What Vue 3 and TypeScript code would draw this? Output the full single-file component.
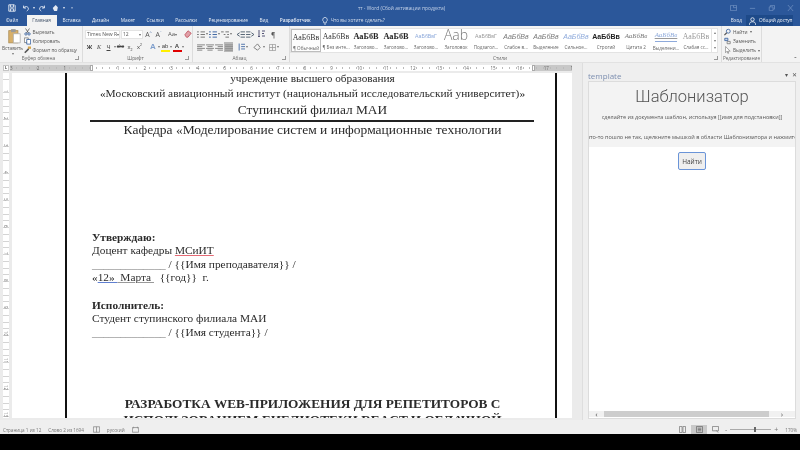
<script setup lang="ts">
const tabs = ['Файл', 'Главная', 'Вставка', 'Дизайн', 'Макет', 'Ссылки', 'Рассылки', 'Рецензирование', 'Вид', 'Разработчик']

const styles = [
  { big: 'АаБбВв', name: '¶ Обычный', cls: 'serif', active: true },
  { big: 'АаБбВв', name: '¶ Без инте...', cls: 'serif' },
  { big: 'АаБбВ', name: 'Заголово...', cls: 'serif bold' },
  { big: 'АаБбВ', name: 'Заголово...', cls: 'serif bold' },
  { big: 'АаБбВвГ', name: 'Заголово...', cls: 'small blue' },
  { big: 'Aab', name: 'Заголовок', cls: 'huge' },
  { big: 'АаБбВвГ', name: 'Подзагол...', cls: 'small grey' },
  { big: 'АаБбВв', name: 'Слабое в...', cls: 'ital' },
  { big: 'АаБбВв', name: 'Выделение', cls: 'ital' },
  { big: 'АаБбВв', name: 'Сильное...', cls: 'ital blue' },
  { big: 'АаБбВв', name: 'Строгий', cls: 'bold sans' },
  { big: 'АаБбВв', name: 'Цитата 2', cls: 'serif ital' },
  { big: 'АаБбВв', name: 'Выделени...', cls: 'serif ital blue under' },
  { big: 'АаБбВв', name: 'Слабая сс...', cls: 'serif grey' },
]

const hNums = [3, 2, 1, 0, 1, 2, 3, 4, 5, 6, 7, 8, 9, 10, 11, 12, 13, 14, 15, 16, 17, 18]
const vNums = [1, 2, 3, 4, 5, 6, 7, 8, 9, 10, 11, 12, 13]

const teacherLine = ' / {{Имя преподавателя}} /'
const yearLine = '  {{год}}  г.'
const studentLine = ' / {{Имя студента}} /'
</script>

<template>
  <div class="word">
    <header class="titlebar">
      <div class="qat">
        <svg width="8" height="8" viewBox="0 0 10 10"><path d="M1 1h7l1 1v7H1z M3 1v3h4V1 M3 9V6h4v3" fill="none" stroke="#fff" /></svg>
        <svg class="gap" width="8" height="8" viewBox="0 0 10 10"><path d="M2 2v3h3 M2 5c2-3 6-2 6 1 0 1-1 2-2 3" fill="none" stroke="#dfe6f2" stroke-width="1.2" /></svg>
        <span class="caret">▾</span>
        <svg width="8" height="8" viewBox="0 0 10 10"><path d="M8 2v3H5 M8 5C6 2 2 3 2 6c0 1 1 2 2 3" fill="none" stroke="#dfe6f2" stroke-width="1.2" /></svg>
        <svg class="gap" width="8" height="8" viewBox="0 0 11 10"><path d="M1 5l4-4 3 3-1 5H3z" fill="#e4e9f3" /></svg>
        <span class="caret">▾</span>
        <span class="caret gap">▿</span>
      </div>
      <div class="doc-title">тт - Word (Сбой активации продукта)</div>
      <div class="winbtns">
        <svg width="7" height="6" viewBox="0 0 9 8"><path d="M.5.5h8v7h-8z M4.500.5v3h4" fill="none" stroke="#6f8fc0" /></svg>
        <svg width="7" height="6" viewBox="0 0 9 8"><path d="M1 4.500h7" stroke="#6f8fc0" /></svg>
        <svg width="7" height="6" viewBox="0 0 9 8"><path d="M1.500 2.500h5v5h-5z M3 2.500V.5h5.500v5h-2" fill="none" stroke="#6f8fc0" /></svg>
        <svg width="7" height="6" viewBox="0 0 9 8"><path d="M1 0l7 8M8 0L1 8" stroke="#6f8fc0" /></svg>
      </div>
    </header>

    <nav class="tabrow">
      <span v-for="t in tabs" :key="t" class="tab" :class="{ on: t === 'Главная', bold: t === 'Разработчик', first: t === 'Файл' }">{{ t }}</span>
      <span class="tell">
        <svg width="6" height="8" viewBox="0 0 7 10"><path d="M3.500.5a3 3 0 0 1 1.500 5.500v1.500H2V6A3 3 0 0 1 3.500.5z M2.500 9h2" fill="none" stroke="#dce4f1" /></svg>
        Что вы хотите сделать?
      </span>
      <span class="login">Вход</span>
      <span class="share">
        <svg width="7" height="8" viewBox="0 0 9 10"><circle cx="4.500" cy="3" r="2.200" fill="none" stroke="#fff" /><path d="M.5 10c0-3 1.500-4 4-4s4 1 4 4" fill="none" stroke="#fff" /></svg>
        Общий доступ
      </span>
    </nav>

    <section class="ribbon">
      <div class="grp clip">
        <div class="grp-body clip-body">
          <div class="paste">
            <svg width="13" height="16" viewBox="0 0 17 20">
              <rect x="1" y="3" width="12" height="16" fill="#d8b06a" stroke="#a98a55" />
              <rect x="4" y="1" width="6" height="4" fill="#9a9a9a" />
              <path d="M7 7h9v12H7z" fill="#fff" stroke="#aaa" />
            </svg>
            <span>Вставить</span>
            <span class="mini-caret">▾</span>
          </div>
          <div class="clip-list">
            <span>
              <svg width="7" height="8" viewBox="0 0 9 9"><path d="M2 0l4 6M7 0L3 6" stroke="#555" /><circle cx="2.500" cy="7" r="1.500" fill="none" stroke="#2b579a" /><circle cx="6.500" cy="7" r="1.500" fill="none" stroke="#2b579a" /></svg>
              Вырезать
            </span>
            <span>
              <svg width="7" height="8" viewBox="0 0 9 9"><path d="M.5.5h5v6h-5z" fill="#fff" stroke="#777" /><path d="M3.500 2.500h5v6h-5z" fill="#fff" stroke="#2b579a" /></svg>
              Копировать
            </span>
            <span>
              <svg width="7" height="8" viewBox="0 0 9 9"><path d="M5 0h4v3H5z" fill="#d8a548" /><path d="M6 3L1 8" stroke="#555" stroke-width="2" /></svg>
              Формат по образцу
            </span>
          </div>
        </div>
        <div class="grp-label pr5">Буфер обмена<i class="launch" /></div>
      </div>

      <div class="grp font">
        <div class="grp-body stack">
          <div class="line">
            <span class="combo w-name">Times New R<b>▾</b></span>
            <span class="combo w-size">12<b>▾</b></span>
            <span class="glyph sans">A<sup>^</sup></span>
            <span class="glyph sans">A<sup>ˇ</sup></span>
            <span class="glyph sans wide">Aa<b>▾</b></span>
            <svg class="eraser" width="8" height="8" viewBox="0 0 10 10"><path d="M1 6l4-5 4 3-4 5H3z" fill="#e0a0a8" stroke="#c0505c" /></svg>
          </div>
          <div class="line fmt">
            <span class="g b">Ж</span>
            <span class="g i">К</span>
            <span class="g u">Ч</span>
            <span class="mini-caret">▾</span>
            <span class="g s">abc</span>
            <span class="g">x<sub>2</sub></span>
            <span class="g">x<sup>2</sup></span>
            <span class="g effect">A</span>
            <span class="mini-caret">▾</span>
            <span class="g mark">ab</span>
            <span class="mini-caret">▾</span>
            <span class="g red">A</span>
            <span class="mini-caret">▾</span>
          </div>
        </div>
        <div class="grp-label pr6">Шрифт<i class="launch" /></div>
      </div>

      <div class="grp para">
        <div class="grp-body stack">
          <div class="line para-line">
            <svg width="8" height="7" viewBox="0 0 9 8"><path d="M0 1h2M4 1h5M0 4h2M4 4h5M0 7h2M4 7h5" stroke="#666" /></svg>
            <span class="mini-caret">▾</span>
            <svg width="8" height="7" viewBox="0 0 9 8"><path d="M0 1h2M4 1h5M0 4h2M4 4h5M0 7h2M4 7h5" stroke="#2b579a" /></svg>
            <span class="mini-caret">▾</span>
            <svg width="8" height="7" viewBox="0 0 9 8"><path d="M0 1h3M3 4h2M5 7h4M5 1h4M7 4h2" stroke="#666" /></svg>
            <span class="mini-caret">▾</span>
            <svg class="gap2" width="8" height="7" viewBox="0 0 9 8"><path d="M4 1h5M4 4h5M4 7h5M3 2L0 4l3 2" fill="none" stroke="#456" /></svg>
            <svg width="8" height="7" viewBox="0 0 9 8"><path d="M0 1h5M0 4h5M0 7h5M6 2l3 2-3 2" fill="none" stroke="#456" /></svg>
            <svg class="gap5" width="7" height="8" viewBox="0 0 7 8"><path d="M1 0v7M0 6l1 1 1-1M4 1h3M4 3.500h2M4 6h3" fill="none" stroke="#557" /></svg>
            <span class="gap3 pilcrow">¶</span>
          </div>
          <div class="line para-line">
            <svg width="8" height="7" viewBox="0 0 9 8"><path d="M0 1h9M0 3h6M0 5h9M0 7h6" stroke="#777" /></svg>
            <svg width="8" height="7" viewBox="0 0 9 8"><path d="M0 1h9M1.500 3h6M0 5h9M1.500 7h6" stroke="#777" /></svg>
            <svg width="8" height="7" viewBox="0 0 9 8"><path d="M0 1h9M3 3h6M0 5h9M3 7h6" stroke="#777" /></svg>
            <span class="justify"><svg width="8" height="7" viewBox="0 0 9 8"><path d="M0 1h9M0 3h9M0 5h9M0 7h9" stroke="#888" /></svg></span>
            <svg class="gap2" width="7" height="8" viewBox="0 0 9 9"><path d="M4 1h5M4 4h5M4 7h5M1.500 0v9" fill="none" stroke="#2b579a" /></svg>
            <span class="mini-caret">▾</span>
            <svg class="gap4" width="9" height="9" viewBox="0 0 10 10"><path d="M1 5l4-4 3 4-3 3z" fill="#f4f4f4" stroke="#777" /></svg>
            <span class="mini-caret">▾</span>
            <svg class="gap5" width="7" height="7" viewBox="0 0 9 9"><path d="M.5.5h8v8h-8zM4.500.5v8M.5 4.500h8" fill="none" stroke="#999" /></svg>
            <span class="mini-caret">▾</span>
          </div>
        </div>
        <div class="grp-label pr7">Абзац<i class="launch" /></div>
      </div>

      <div class="grp gallery-grp">
        <div class="grp-body">
          <div class="gallery">
            <div v-for="(s, i) in styles" :key="i" class="style" :class="{ active: s.active }">
              <span class="style-big" :class="s.cls">{{ s.big }}</span>
              <span class="style-name">{{ s.name }}</span>
            </div>
            <div class="gal-scroll"><span>▴</span><span>▾</span><span>▾</span></div>
          </div>
        </div>
        <div class="grp-label pr11">Стили<i class="launch" /></div>
      </div>

      <div class="grp edit">
        <div class="grp-body edit-list">
          <span>
            <svg width="7" height="8" viewBox="0 0 9 9"><circle cx="5.500" cy="3.500" r="2.500" fill="none" stroke="#2b579a" /><path d="M3.500 5.500L.5 8.500" stroke="#555" stroke-width="1.500" /></svg>
            Найти <b>▾</b>
          </span>
          <span>
            <svg width="7" height="8" viewBox="0 0 9 9"><path d="M1 1h4v3H1z" fill="#cfd8e8" stroke="#2b579a" /><path d="M4 5h4v3H4z" fill="#eee" stroke="#777" /></svg>
            Заменить
          </span>
          <span>
            <svg width="7" height="8" viewBox="0 0 9 9"><path d="M2 0v8l2-2 1 3 1-.5L5 6h3z" fill="#fff" stroke="#777" stroke-width=".8" /></svg>
            Выделить <b>▾</b>
          </span>
        </div>
        <div class="grp-label">Редактирование</div>
      </div>
      <span class="collapse">ˆ</span>
    </section>

    <main class="workspace">
      <div class="doc-col">
        <div class="ruler-row">
          <span class="corner">L</span>
          <div class="hruler">
            <span v-for="(n, i) in hNums" :key="i" class="hcell">{{ n === 0 ? '' : n }}</span>
            <i class="marker m-left" />
            <i class="marker m-right" />
          </div>
        </div>
        <div class="doc">
          <div class="vruler">
            <span v-for="n in vNums" :key="n" class="vcell">{{ n }}</span>
          </div>
          <div class="page">
            <div class="frame">
              <p class="c l1">учреждение высшего образования</p>
              <p class="c l2">«Московский авиационный институт (национальный исследовательский университет)»</p>
              <p class="c l3">Ступинский филиал МАИ</p>
              <div class="rule" />
              <p class="c l4">Кафедра «Моделирование систем и информационные технологии</p>
              <div class="approve">
                <p class="bold">Утверждаю:</p>
                <p>Доцент кафедры <span class="spell">МСиИТ</span></p>
                <p><span class="blank">_____________</span>{{ teacherLine }}</p>
                <p class="pre">«<span class="gram">12»   </span><span class="under">  Марта    </span>{{ yearLine }}</p>
                <p class="spacer">&nbsp;</p>
                <p class="bold">Исполнитель:</p>
                <p>Студент ступинского филиала МАИ</p>
                <p><span class="blank">_____________</span>{{ studentLine }}</p>
              </div>
              <p class="c heading bold first-h">РАЗРАБОТКА WEB-ПРИЛОЖЕНИЯ ДЛЯ РЕПЕТИТОРОВ С</p>
              <p class="c heading bold">ИСПОЛЬЗОВАНИЕМ БИБЛИОТЕКИ REACT И ОБЛАЧНОЙ</p>
            </div>
          </div>
        </div>
      </div>
      <aside class="pane">
        <div class="pane-head">
          <span class="pane-title">template</span>
          <span class="pane-ctl">▾ <b>✕</b></span>
        </div>
        <div class="pane-box">
          <div class="pane-top">
            <h1>Шаблонизатор</h1>
            <p>сделайте из документа шаблон, используя [[имя для подстановки]]</p>
            <p class="cut">что-то пошло не так, щелкните мышкой в области Шаблонизатора и нажмите</p>
          </div>
          <div class="pane-main">
            <button type="button" class="find">Найти</button>
          </div>
          <div class="hscroll">
            <span class="arrow">‹</span>
            <i />
            <span class="arrow right">›</span>
          </div>
        </div>
      </aside>
    </main>

    <footer class="status">
      <span>Страница 1 из 12</span>
      <span>Слово 2 из 1694</span>
      <svg class="st-gap" width="7" height="7" viewBox="0 0 9 8"><path d="M.5.5h8v7h-8zM4.500.5v7" fill="none" stroke="#888" /></svg>
      <span>русский</span>
      <svg width="7" height="7" viewBox="0 0 9 8"><path d="M.5 1.500h8v6h-8zM2 .5v2M7 .5v2" fill="none" stroke="#888" /></svg>
      <div class="status-right">
        <svg width="7" height="7" viewBox="0 0 8 8"><path d="M.5.5h3v7h-3zM4.500.5h3v7h-3z" fill="none" stroke="#888" /></svg>
        <span class="view-on"><svg width="7" height="7" viewBox="0 0 8 8"><path d="M.5.5h7v7h-7zM2 2.500h4M2 4h4M2 5.500h4" fill="none" stroke="#777" /></svg></span>
        <svg width="7" height="7" viewBox="0 0 8 8"><path d="M.5.5h7v5h-7zM5 5l2 2.500" fill="none" stroke="#888" /></svg>
        <div class="zoom">
          <span>-</span>
          <div class="zoom-track"><i /></div>
          <span>+</span>
        </div>
        <span class="pct">170%</span>
      </div>
    </footer>
    <div class="black" />
  </div>
</template>

<style>
html, body { margin: 0; background: #000; }
</style>

<style scoped>
.word {
  width: 800px;
  height: 450px;
  display: flex;
  flex-direction: column;
  overflow: hidden;
  background: #000;
  color: #444;
  font-family: "Open Sans", "Liberation Sans", sans-serif;
  filter: blur(0.5px);
}
p, h1 { margin: 0; }
svg { flex: none; display: block; }

.titlebar {
  height: 15px;
  flex: none;
  display: flex;
  align-items: center;
  background: #2b579a;
  color: #c6d3e8;
  font-size: 4.900px;
  padding: 0 6px 0 8px;
}
.qat { width: 350px; display: flex; align-items: center; gap: 3px; color: #dfe6f2; }
.qat .gap { margin-left: 3px; }
.caret { font-size: 4px; }
.doc-title { flex: 1; }
.winbtns { display: flex; gap: 12px; align-items: center; }

.tabrow {
  height: 11px;
  flex: none;
  display: flex;
  align-items: stretch;
  background: #2b579a;
  color: #e6ecf5;
  font-size: 4.750px;
  line-height: 11px;
  padding-left: 0.5px;
}
.tab { padding: 0 5.500px; margin-right: 0.5px; white-space: nowrap; }
.tab.first { margin-right: 3px; }
.tab.on { background: #f3f3f3; color: #44546a; }
.tab.bold { font-weight: 600; }
.tell { display: flex; align-items: center; gap: 3px; margin-left: 5px; color: #d5deec; white-space: nowrap; }
.login { margin-left: auto; color: #e6ecf5; margin-right: 4px; }
.share {
  display: flex;
  align-items: center;
  gap: 3px;
  width: 47px;
  padding-left: 3px;
  margin-right: 7px;
  background: #1e4a89;
  color: #f1f4f9;
  box-sizing: border-box;
  white-space: nowrap;
}

.ribbon {
  height: 37px;
  flex: none;
  display: flex;
  background: #f3f3f3;
  border-bottom: 1px solid #e2e2e2;
  box-sizing: border-box;
}
.grp {
  display: flex;
  flex-direction: column;
  flex: none;
  border-right: 1px solid #dcdcdc;
  box-sizing: border-box;
}
.grp-body { flex: 1; min-height: 0; display: flex; }
.grp-label {
  height: 7px;
  line-height: 6px;
  font-size: 4.800px;
  text-align: center;
  color: #666;
  position: relative;
}
.pr5 { padding-right: 5px; }
.pr6 { padding-right: 6px; }
.pr7 { padding-right: 7px; }
.pr11 { padding-right: 11px; }
.launch {
  position: absolute;
  right: 3px;
  top: 1px;
  width: 3px;
  height: 3px;
  border-right: 1px solid #999;
  border-bottom: 1px solid #999;
}
.clip { width: 83px; }
.clip-body { padding: 1px 0 0 2px; }
.paste {
  width: 21px;
  display: flex;
  flex-direction: column;
  align-items: center;
  font-size: 4.800px;
  color: #555;
  line-height: 6px;
}
.paste svg { margin: 1px 0 1px 3px; }
.mini-caret { font-size: 4px; color: #777; line-height: 6px; }
.clip-list {
  display: flex;
  flex-direction: column;
  margin-left: 1px;
  font-size: 4.700px;
  color: #555;
}
.clip-list span { display: flex; align-items: center; gap: 1.500px; height: 9.500px; white-space: nowrap; }

.font { width: 110px; padding-left: 2px; }
.stack { flex-direction: column; padding-top: 3px; gap: 3px; }
.line { display: flex; align-items: center; height: 10px; white-space: nowrap; }
.combo {
  height: 9px;
  line-height: 7px;
  font-size: 5px;
  color: #555;
  background: #fff;
  border: 1px solid #e3e3e3;
  box-sizing: border-box;
  padding-left: 1px;
  display: flex;
  justify-content: space-between;
}
.combo b, .glyph b, .edit-list b { font-weight: 400; font-size: 4px; color: #666; }
.w-name { width: 35px; }
.w-size { width: 22px; margin-left: 1px; padding-right: 1px; }
.glyph { width: 9px; font-size: 7px; text-align: center; margin-left: 1px; color: #555; }
.glyph sup { font-size: 4px; vertical-align: top; line-height: 6px; color: #2b579a; }
.glyph.wide { width: 15px; margin-left: 2px; font-size: 6px; }
.eraser { margin-left: 4px; }
.fmt { gap: 0.5px; }
.g { width: 9px; font-size: 6px; text-align: center; color: #444; font-family: "Liberation Sans", sans-serif; line-height: 10px; }
.g sub, .g sup { font-size: 3.500px; line-height: 0; }
.g.b { font-weight: 700; }
.g.i { font-style: italic; font-family: "Liberation Serif", serif; }
.g.u { text-decoration: underline; }
.g.s { font-size: 4.500px; text-decoration: line-through; }
.g.effect { margin-left: 4px; color: #7f9fcc; font-size: 8px; font-weight: 700; }
.g.mark { border-bottom: 2px solid #ffef00; height: 8px; line-height: 8px; }
.g.red { border-bottom: 2px solid #e00000; height: 8px; line-height: 8px; font-weight: 700; }

.para { width: 97px; padding-left: 4px; }
.para-line { gap: 1px; }
.gap2 { margin-left: 4px; }
.gap3 { margin-left: 5px; }
.gap4 { margin-left: 4px; }
.gap5 { margin-left: 3px; }
.pilcrow { font-size: 7px; color: #555; }
.justify { background: #b9b9b9; padding: 1.500px 0.5px; display: block; }

.gallery-grp { width: 432px; }
.gallery {
  margin: 2px 0 0 0;
  width: 428px;
  height: 25px;
  display: flex;
  background: #fff;
  border: 1px solid #e3e3e3;
  box-sizing: border-box;
}
.style {
  width: 30px;
  flex: none;
  box-sizing: border-box;
  display: flex;
  flex-direction: column;
  align-items: center;
  overflow: hidden;
  white-space: nowrap;
}
.style.active { border: 1px solid #bdbdbd; background: #fdfdfd; }
.style-big {
  height: 14px;
  line-height: 15px;
  font-size: 7.500px;
  color: #555;
  font-family: "Liberation Sans", sans-serif;
}
.style-big.serif { font-family: "Liberation Serif", serif; font-size: 7.800px; color: #333; }
.style-big.bold { font-weight: 700; color: #222; }
.style-big.serif.bold { font-size: 8.300px; }
.style-big.small { font-size: 5.200px; }
.style-big.blue { color: #8eaadb; }
.style-big.grey { color: #999; }
.style-big.huge { font-size: 14px; line-height: 12px; color: #777; font-family: "Open Sans", sans-serif; font-weight: 300; }
.style-big.ital { font-style: italic; font-size: 7px; color: #777; }
.style-big.blue.ital { color: #8eaadb; }
.style-big.under { border-bottom: 1px solid #8eaadb; height: 11px; line-height: 11px; margin-top: 1px; margin-bottom: 2px; }
.style-big.sans { font-size: 7px; color: #222; }
.style-name { font-size: 4.600px; color: #666; line-height: 8px; }
.gal-scroll {
  flex: 1;
  display: flex;
  flex-direction: column;
  border-left: 1px solid #e3e3e3;
  font-size: 4px;
  line-height: 7.600px;
  text-align: center;
  color: #777;
}

.edit { width: 40px; }
.edit-list {
  flex-direction: column;
  padding: 1px 0 0 2px;
  font-size: 4.800px;
  color: #555;
}
.edit-list span { display: flex; align-items: center; gap: 2px; height: 9.500px; white-space: nowrap; }
.edit .grp-label { font-size: 4.600px; white-space: nowrap; }
.collapse { margin-left: auto; margin-right: 3px; align-self: flex-end; font-size: 8px; line-height: 6px; color: #555; }

.workspace { height: 357px; flex: none; display: flex; background: #efefef; }
.doc-col { width: 582px; flex: none; display: flex; flex-direction: column; background: #ebebeb; }

.ruler-row {
  height: 10px;
  flex: none;
  display: flex;
  overflow: hidden;
  padding-top: 2px;
  box-sizing: border-box;
}
.corner {
  width: 6px;
  height: 6px;
  margin: 0 1px 0 3px;
  background: #fff;
  border: 1px solid #c4c4c4;
  box-sizing: border-box;
  font-size: 3.500px;
  line-height: 4px;
  text-align: center;
  font-weight: 700;
  color: #333;
}
.hruler {
  width: 562px;
  height: 6px;
  display: flex;
  flex: none;
  overflow: hidden;
  position: relative;
  background: linear-gradient(to right, #c8c8c8 0 81px, #fff 81px 523px, #c8c8c8 523px);
}
.hcell {
  flex: none;
  width: 26.700px;
  box-sizing: border-box;
  font-size: 4.500px;
  line-height: 6px;
  color: #666;
  background: repeating-linear-gradient(to right, transparent 0 5.670px, #bbb 5.670px 6.670px) 0 2px / 100% 2px no-repeat;
}
.marker {
  position: absolute;
  top: 0;
  width: 3px;
  height: 6px;
  background: #fff;
  border: 1px solid #aaa;
  box-sizing: border-box;
}
.m-left { left: 80px; }
.m-right { left: 522px; }

.doc { height: 345px; flex: none; display: flex; }
.vruler {
  width: 6px;
  margin: 0 3px;
  flex: none;
  overflow: hidden;
  display: flex;
  flex-direction: column;
  padding-top: 4.500px;
  background: #fff repeating-linear-gradient(to bottom, transparent 0 5.750px, #d4d4d4 5.750px 6.750px);
  box-sizing: border-box;
}
.vcell {
  flex: none;
  height: 27px;
  font-size: 4.500px;
  line-height: 6px;
  color: #777;
  text-align: center;
  writing-mode: vertical-rl;
}
.page {
  width: 560px;
  flex: none;
  background: #fff;
  overflow: hidden;
}
.frame {
  width: 492px;
  height: 400px;
  margin-left: 53px;
  border-left: 2px solid #111;
  border-right: 2px solid #111;
  box-sizing: border-box;
  color: #2b2b2b;
  font-family: "Liberation Serif", serif;
  font-size: 11.350px;
  line-height: 13.500px;
}
.c { text-align: center; white-space: nowrap; padding-left: 3px; }
.l1 { font-size: 11.300px; line-height: 10px; }
.l2 { font-size: 11.400px; line-height: 20px; }
.l3 { font-size: 13.350px; line-height: 14px; }
.l4 { font-size: 13.500px; line-height: 16px; }
.rule { height: 2px; margin: 3px 21px 0 23px; background: #222; }
.approve { margin: 92.500px 0 0 25px; }
.bold { font-weight: 700; }
.pre { white-space: pre; }
.spell { text-decoration: underline; text-decoration-color: #e56a75; }
.gram { text-decoration: underline; text-decoration-color: #5f7fd0; }
.under { text-decoration: underline; text-decoration-color: #999; white-space: pre; color: #333; }
.blank { color: #777; }
.spacer { height: 14px; }
.heading { font-size: 13.300px; line-height: 16px; }
.first-h { margin-top: 57px; }

.pane {
  flex: none;
  width: 218px;
  padding-left: 5px;
  box-sizing: border-box;
  display: flex;
  flex-direction: column;
  background: #efefef;
  border-left: 1px solid #dedede;
}
.pane-head {
  height: 18px;
  flex: none;
  display: flex;
  justify-content: space-between;
  align-items: center;
  padding: 6px 3px 0 0;
  box-sizing: border-box;
  font-size: 8px;
  color: #7d8fb0;
}
.pane-ctl { font-size: 6px; color: #555; }
.pane-ctl b { margin-left: 2px; font-weight: 400; }
.pane-box {
  flex: none;
  width: 208px;
  height: 338px;
  display: flex;
  flex-direction: column;
  overflow: hidden;
  background: #fff;
  border: 1px solid #dcdcdc;
  box-sizing: border-box;
}
.pane-top {
  height: 65px;
  flex: none;
  background: #f3f3f3;
  text-align: center;
  white-space: nowrap;
  color: #555;
  font-size: 5.500px;
  line-height: 8px;
}
.pane-top h1 {
  font-family: Roboto, "Open Sans", sans-serif;
  font-weight: 300;
  font-size: 16.500px;
  line-height: 23px;
  color: #555;
  padding-top: 2.500px;
  margin-bottom: 5px;
}
.pane-top p { margin-bottom: 12px; }
.cut { margin-left: -12px; margin-right: -12px; }
.pane-main { flex: 1; display: flex; justify-content: center; align-items: flex-start; padding-top: 5px; }
.find {
  width: 28px;
  height: 18px;
  padding: 0;
  font: inherit;
  font-size: 6.500px;
  color: #444;
  background: #efefef;
  border: 1.500px solid #6a94d8;
  border-radius: 2px;
}
.hscroll {
  height: 6px;
  margin-bottom: 1px;
  flex: none;
  display: flex;
  align-items: center;
  background: #f1f1f1;
  font-size: 8px;
  color: #555;
}
.hscroll .arrow { width: 15px; text-align: center; line-height: 6px; }
.hscroll .arrow.right { width: 26px; }
.hscroll i { flex: 1; height: 100%; background: #cdcdcd; }

.status {
  height: 14px;
  flex: none;
  display: flex;
  align-items: center;
  gap: 7px;
  padding: 5px 0 0 3px;
  background: #efefef;
  box-sizing: border-box;
  font-size: 4.600px;
  color: #777;
}
.st-gap { margin-left: 2px; }
.status-right { margin-left: auto; display: flex; align-items: center; height: 100%; gap: 5px; padding-right: 3px; }
.view-on { background: #c9c9c9; width: 16px; height: 100%; display: flex; align-items: center; justify-content: center; }
.zoom { display: flex; align-items: center; gap: 3px; font-size: 7px; margin-left: 1px; }
.zoom-track { width: 41px; height: 1px; background: #aaa; display: flex; justify-content: center; align-items: center; }
.zoom-track i { width: 2px; height: 5px; background: #666; margin-left: 8px; }
.pct { margin-left: 2px; }
.black { flex: 1; background: #000; }
</style>
